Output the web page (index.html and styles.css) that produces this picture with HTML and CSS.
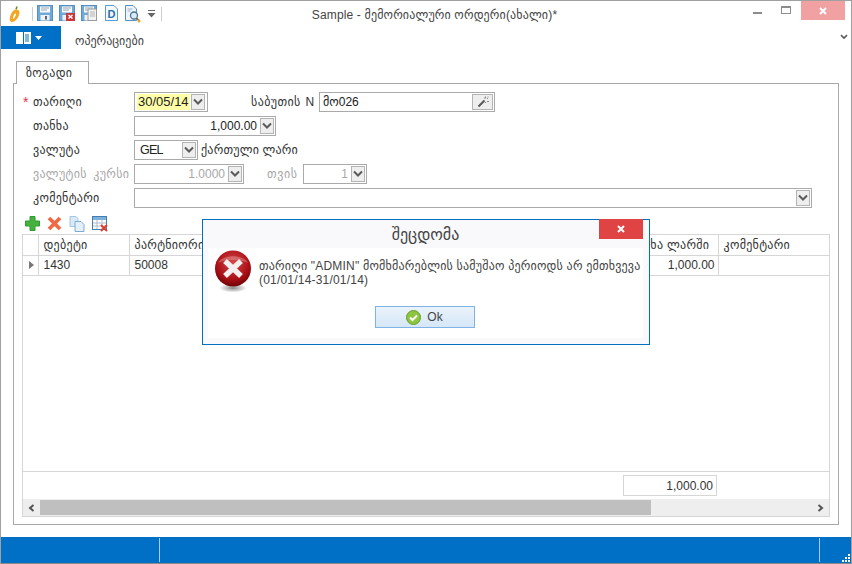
FILE: index.html
```html
<!DOCTYPE html>
<html>
<head>
    <meta charset="utf-8">
    <title>Sample</title>
    <link rel="stylesheet" href="styles.css">
</head>
<body>
    <svg class="defs" width="0" height="0">
        <symbol id="arrow-down" viewBox="0 0 10 8">
            <path d="M1 1.500 L5 5.500 L9 1.500" fill="none" stroke="#5a5a5a" stroke-width="2"/>
        </symbol>
        <symbol id="floppy" viewBox="0 0 16 16">
            <rect x="0.500" y="0.500" width="15" height="15" fill="#6fa9d8" stroke="#5a8fbd"/>
            <rect x="3" y="1.500" width="10" height="6" fill="#f7fafc"/>
            <path d="M4 3h8M4 5h6" stroke="#9aa8b5"/>
            <rect x="3.500" y="10" width="9" height="5.500" fill="#eef2f6"/>
            <rect x="8" y="11" width="2" height="3.500" fill="#55697a"/>
        </symbol>
    </svg>

    <div class="window">
        <div class="titlebar">
            <svg class="logo" width="14" height="18" viewBox="0 0 14 18">
                <path d="M8 3.500 L9 0.500" stroke="#5d8f2a" stroke-width="1.500"/>
                <path d="M5 5 C8 2.500 12 3.500 11.500 7 C11 10.500 8 16 4 16 C1 16 1.500 12 2.500 9.500 C3 8 4 6 5 5 Z M6.500 8 C5.500 9.500 4.500 12 5 13 C6 13 7.500 10.500 8 8.500 C8.200 7.500 7.200 7 6.500 8 Z" fill="#f5a623" fill-rule="evenodd"/>
            </svg>
            <span class="sep sep-first"></span>
            <svg class="qa" width="16" height="16"><use href="#floppy"/></svg>
            <svg class="qa" width="16" height="16" viewBox="0 0 16 16">
                <use href="#floppy" width="16" height="16"/>
                <rect x="7" y="8" width="9" height="8" fill="#c8383a"/>
                <path d="M9.500 10l4 3.500M13.500 10l-4 3.500" stroke="#fff" stroke-width="1.400"/>
            </svg>
            <svg class="qa" width="16" height="16" viewBox="0 0 16 16">
                <use href="#floppy" width="16" height="16"/>
                <path d="M7 4h8.500v11.500H7z" fill="#f2f2f2" stroke="#9a9a9a"/>
                <path d="M9 7h5M9 9h5M9 11h5" stroke="#b5b5b5"/>
            </svg>
            <svg class="qa" width="16" height="16" viewBox="0 0 16 16">
                <path d="M2.500 0.500H11L14.500 4V15.500H2.500Z" fill="#f4f9fd" stroke="#5b9bd0"/>
                <text class="doc-letter" x="4.500" y="13">D</text>
            </svg>
            <svg class="qa" width="16" height="18" viewBox="0 0 16 18">
                <path d="M0.500 0.500H8L11.500 4V15.500H0.500Z" fill="#eef4fa" stroke="#5b8fbd"/>
                <path d="M2.500 4h5M2.500 6h3" stroke="#9fb6ca"/>
                <circle cx="9" cy="10.500" r="3.500" fill="#d8ecf7" stroke="#4a7396" stroke-width="1.300"/>
                <path d="M11.500 13l2.500 2.500" stroke="#7a6a40" stroke-width="1.500"/>
                <circle cx="14" cy="16" r="1.500" fill="#f0a030"/>
            </svg>
            <svg class="qa-more" width="9" height="8" viewBox="0 0 9 8">
                <path d="M1 0.500h7" stroke="#666"/>
                <path d="M0.500 3h8L4.500 7.500Z" fill="#666"/>
            </svg>
            <span class="sep"></span>
            <div class="title">Sample - მემორიალური ორდერი(ახალი)*</div>
            <svg class="win-min" width="9" height="2"><rect width="9" height="2" fill="#8c8c8c"/></svg>
            <svg class="win-max" width="10" height="8" viewBox="0 0 10 8">
                <rect x="0.500" y="0.500" width="9" height="7" fill="none" stroke="#8c8c8c"/>
                <rect x="0" y="0" width="10" height="2" fill="#8c8c8c"/>
            </svg>
            <div class="win-close">
                <svg width="8" height="8" viewBox="0 0 8 8"><path d="M1 1l6 6M7 1l-6 6" stroke="#fff" stroke-width="2"/></svg>
            </div>
        </div>

        <div class="menubar">
            <div class="app-button">
                <svg width="15" height="12" viewBox="0 0 15 12">
                    <rect x="0.500" y="0.500" width="14" height="11" fill="#fff" stroke="#fff"/>
                    <path d="M7.500 0v12" stroke="#0070c6"/>
                    <path d="M9 3h4M9 5h4M9 7h4M9 9h4" stroke="#0070c6"/>
                </svg>
                <svg width="7" height="4" viewBox="0 0 7 4"><path d="M0 0h7L3.500 4Z" fill="#fff"/></svg>
            </div>
            <div class="menu-item">ოპერაციები</div>
            <svg class="collapse" width="8" height="6"><use href="#arrow-down"/></svg>
        </div>

        <div class="tabs">
            <div class="tab">ზოგადი</div>
        </div>

        <div class="panel">
            <div class="form">
                <div class="row">
                    <label class="lbl"><span class="req">*</span>თარიღი</label>
                    <div class="box w-date">
                        <span class="val val-hl">30/05/14</span>
                        <span class="drop"><svg width="10" height="8"><use href="#arrow-down"/></svg></span>
                    </div>
                    <label class="lbl-doc">საბუთის N</label>
                    <div class="box w-doc">
                        <span class="val val-left">მო026</span>
                        <span class="drop drop-wand">
                            <svg width="12" height="12" viewBox="0 0 12 12">
                                <path d="M1.500 10.500L7.500 4.500" stroke="#555" stroke-width="2"/>
                                <path d="M8.500 0.500v2M10.500 2v1M7 2h1M10 5.500h2M8.500 6v1M11 0.500v1" stroke="#888"/>
                            </svg>
                        </span>
                    </div>
                </div>
                <div class="row">
                    <label class="lbl">თანხა</label>
                    <div class="box w-amount">
                        <span class="val val-right">1,000.00</span>
                        <span class="drop"><svg width="10" height="8"><use href="#arrow-down"/></svg></span>
                    </div>
                </div>
                <div class="row">
                    <label class="lbl">ვალუტა</label>
                    <div class="box w-cur">
                        <span class="val val-cur">GEL</span>
                        <span class="drop"><svg width="10" height="8"><use href="#arrow-down"/></svg></span>
                    </div>
                    <span class="cur-name">ქართული ლარი</span>
                </div>
                <div class="row">
                    <label class="lbl is-disabled">ვალუტის კურსი</label>
                    <div class="box w-rate is-disabled">
                        <span class="val val-right">1.0000</span>
                        <span class="drop"><svg width="10" height="8"><use href="#arrow-down"/></svg></span>
                    </div>
                    <label class="lbl-for is-disabled">თვის</label>
                    <div class="box w-for is-disabled">
                        <span class="val val-right">1</span>
                        <span class="drop"><svg width="10" height="8"><use href="#arrow-down"/></svg></span>
                    </div>
                </div>
                <div class="row">
                    <label class="lbl">კომენტარი</label>
                    <div class="box w-comment">
                        <span class="val"></span>
                        <span class="drop"><svg width="10" height="8"><use href="#arrow-down"/></svg></span>
                    </div>
                </div>
            </div>

            <div class="grid-tools">
                <svg width="15" height="15" viewBox="0 0 15 15">
                    <path d="M5 0.500h5v4.500h4.500v5H10v4.500H5V10H0.500V5H5Z" fill="#45b23f" stroke="#2f9a2d"/>
                </svg>
                <svg width="15" height="15" viewBox="0 0 15 15">
                    <path d="M2 2l11 11M13 2L2 13" stroke="#ef6a45" stroke-width="3.800"/>
                </svg>
                <svg width="16" height="16" viewBox="0 0 16 16">
                    <path d="M1 0.500h6l2 2v8H1Z" fill="#d8e9f7" stroke="#a3c6e2"/>
                    <path d="M6 5.500h6l3 3v7H6Z" fill="#e3f0fa" stroke="#7fabd0"/>
                </svg>
                <svg width="17" height="16" viewBox="0 0 17 16">
                    <rect x="0.500" y="0.500" width="14" height="13" fill="#fff" stroke="#3d7fb5"/>
                    <rect x="1" y="1" width="13" height="3" fill="#7fb0d8"/>
                    <path d="M1 7h13M1 10h13M5 4v9M10 4v9" stroke="#b0bcc8"/>
                    <path d="M9 9l6 6M15 9l-6 6" stroke="#e03a2a" stroke-width="1.800"/>
                </svg>
            </div>

            <div class="grid">
                <table class="grid-table">
                    <colgroup>
                        <col class="c-mark">
                        <col class="c-debit">
                        <col class="c-partner">
                        <col class="c-amount">
                        <col>
                    </colgroup>
                    <tr class="head">
                        <th></th>
                        <th>დებეტი</th>
                        <th>პარტნიორი</th>
                        <th>თანხა ლარში</th>
                        <th>კომენტარი</th>
                    </tr>
                    <tr>
                        <td class="mark"><svg width="5" height="8"><path d="M0 0l5 4-5 4Z" fill="#777"/></svg></td>
                        <td>1430</td>
                        <td>50008</td>
                        <td class="num">1,000.00</td>
                        <td></td>
                    </tr>
                </table>
                <div class="grid-space"></div>
                <div class="grid-total">
                    <div class="total-box">1,000.00</div>
                </div>
                <div class="scrollbar">
                    <span class="sb-btn"><svg width="7" height="8" viewBox="0 0 7 8"><path d="M5.500 1L2 4l3.500 3" fill="none" stroke="#555" stroke-width="2"/></svg></span>
                    <span class="sb-thumb"></span>
                    <span class="sb-rest"></span>
                    <span class="sb-btn"><svg width="7" height="8" viewBox="0 0 7 8"><path d="M1.500 1L5 4 1.500 7" fill="none" stroke="#555" stroke-width="2"/></svg></span>
                </div>
            </div>
        </div>

        <div class="statusbar">
            <span class="st-cell st-a"></span>
            <span class="st-cell st-b"></span>
            <svg class="grip" width="9" height="9" viewBox="0 0 9 9">
                <path d="M7 1h2v2H7zM4 4h2v2H4zM7 4h2v2H7zM1 7h2v2H1zM4 7h2v2H4zM7 7h2v2H7z" fill="#fff"/>
            </svg>
        </div>
    </div>

    <!-- error message over the form -->
    <div class="dialog">
        <div class="dialog-title">შეცდომა</div>
        <div class="dialog-close">
            <svg width="8" height="8" viewBox="0 0 8 8"><path d="M1 1l6 6M7 1l-6 6" stroke="#fff" stroke-width="2"/></svg>
        </div>
        <div class="dialog-body">
            <div class="dialog-msg">
                <svg class="err-icon" width="38" height="44" viewBox="0 0 38 44">
                    <defs>
                        <radialGradient id="ball" cx="50%" cy="35%" r="65%">
                            <stop offset="0" stop-color="#d9474a"/>
                            <stop offset="0.700" stop-color="#a80f14"/>
                            <stop offset="1" stop-color="#6e0508"/>
                        </radialGradient>
                        <radialGradient id="shade" cx="50%" cy="50%" r="50%">
                            <stop offset="0" stop-color="#888"/>
                            <stop offset="1" stop-color="#fff"/>
                        </radialGradient>
                    </defs>
                    <ellipse cx="19" cy="38" rx="14" ry="4.500" fill="url(#shade)"/>
                    <circle cx="19" cy="18.500" r="18" fill="url(#ball)"/>
                    <path d="M4 13 C8 4 30 4 34 13 C27 9 11 9 4 13 Z" fill="#fff" opacity="0.250"/>
                    <path d="M11 11l16 15M27 11L11 26" stroke="#f4eeee" stroke-width="5.500"/>
                </svg>
                <p class="msg-text">თარიღი "ADMIN" მომხმარებლის სამუშაო პერიოდს არ ემთხვევა (01/01/14-31/01/14)</p>
            </div>
            <div class="dialog-actions">
                <div class="ok-btn">
                    <svg width="15" height="15" viewBox="0 0 15 15">
                        <circle cx="7.500" cy="7.500" r="7" fill="#8cc63f" stroke="#6a9a2a"/>
                        <path d="M4 7.500l2.500 2.500L11 5.500" fill="none" stroke="#fff" stroke-width="2"/>
                    </svg>
                    <span>Ok</span>
                </div>
            </div>
        </div>
    </div>
</body>
</html>
```

FILE: styles.css
```css
* {
    box-sizing: border-box;
}
html, body {
    margin: 0;
    padding: 0;
    height: 564px;
    overflow: hidden;
}
body {
    background-color: #fff;
    color: #333;
    font-family: "Liberation Sans", "DejaVu Sans", sans-serif;
    font-size: 12px;
    position: relative;
}
.defs {
    position: absolute;
}

.window {
    height: 564px;
    display: flex;
    flex-direction: column;
    border: 1px solid #a0a0a0;
    border-bottom-color: #8c8c8c;
    background-color: #fff;
}

/* title bar */
.titlebar {
    height: 25px;
    flex: none;
    display: flex;
    align-items: flex-start;
    padding-left: 7px;
}
.logo {
    margin-top: 5px;
}
.sep {
    width: 1px;
    height: 14px;
    margin-top: 6px;
    background-color: #ccc;
}
.sep-first {
    margin: 6px 4px 0 10px;
}
.qa {
    margin: 4px 6px 0 0;
    flex: none;
}
.doc-letter {
    font-family: "Liberation Sans", sans-serif;
    font-size: 11px;
    font-weight: bold;
    fill: #2a6fb0;
}
.qa-more {
    margin: 9px 5px 0 0;
}
.title {
    flex: 1;
    text-align: center;
    line-height: 28px;
    padding-right: 46px;
    letter-spacing: 0.15px;
    color: #444;
}
.win-min {
    margin: 11px 19px 0 0;
}
.win-max {
    margin: 5px 10px 0 0;
}
.win-close {
    width: 44px;
    height: 19px;
    margin-right: 6px;
    background-color: #f1a1a1;
    display: flex;
    align-items: center;
    justify-content: center;
}

/* menu row */
.menubar {
    height: 23px;
    flex: none;
    display: flex;
    align-items: center;
}
.app-button {
    width: 60px;
    height: 23px;
    background-color: #0070c6;
    display: flex;
    align-items: center;
    justify-content: center;
    gap: 4px;
    padding-right: 4px;
}
.menu-item {
    margin-left: 14px;
    padding-top: 6px;
    color: #444;
}
.collapse {
    margin: -2px 3px 0 auto;
}

/* tab */
.tabs {
    height: 34px;
    flex: none;
    display: flex;
    align-items: flex-end;
    padding-left: 15px;
}
.tab {
    width: 73px;
    height: 23px;
    border: 1px solid #a8a8a8;
    border-bottom: 0;
    line-height: 23px;
    padding-left: 9px;
    margin-bottom: -1px;
    position: relative;
    background-color: #fff;
    letter-spacing: 0.3px;
}

/* main panel */
.panel {
    width: 826px;
    height: 442px;
    margin-left: 12px;
    flex: none;
    border: 1px solid #a8a8a8;
    display: flex;
    flex-direction: column;
    padding: 8px 8px 7px 8px;
}
.form {
    display: flex;
    flex-direction: column;
    gap: 4px;
    margin-bottom: 5px;
}
.row {
    height: 20px;
    display: flex;
    align-items: center;
}
.lbl {
    width: 112px;
    flex: none;
    padding-left: 11px;
    position: relative;
    letter-spacing: 0.3px;
    word-spacing: 3px;
    white-space: nowrap;
}
.req {
    position: absolute;
    left: 1px;
    top: -1px;
    color: #e8304a;
    font-size: 14px;
}
.lbl-doc {
    margin-left: 43px;
    width: 68px;
    flex: none;
    letter-spacing: 0.4px;
    word-spacing: 1px;
}
.lbl-for {
    margin-left: 23px;
    width: 36px;
    flex: none;
    letter-spacing: 0.6px;
}
.box {
    height: 20px;
    border: 1px solid #aaa;
    display: flex;
    align-items: center;
    padding: 1px;
    flex: none;
    background-color: #fff;
}
.w-date { width: 74px; }
.w-doc { width: 176px; }
.w-amount { width: 142px; }
.w-cur { width: 64px; }
.w-rate { width: 110px; }
.w-for { width: 64px; }
.w-comment { width: 678px; }
.val {
    flex: 1;
    min-width: 0;
    height: 16px;
    line-height: 16px;
    white-space: nowrap;
    color: #222;
}
.val-hl {
    flex: none;
    width: 53px;
    margin: 0 1px;
    padding-left: 1px;
    background-color: #ffffa8;
    font-size: 13px;
}
.val-left {
    padding-left: 2px;
}
.val-cur {
    padding-left: 4px;
    letter-spacing: -0.8px;
    font-size: 12.500px;
}
.val-right {
    text-align: right;
    padding-right: 3px;
}
.drop {
    width: 14px;
    height: 16px;
    flex: none;
    border: 1px solid #b4b4b4;
    background-color: #eee;
    display: flex;
    align-items: center;
    justify-content: center;
}
.drop-wand {
    width: 21px;
}
.cur-name {
    margin-left: 3px;
    letter-spacing: 0.2px;
}
.is-disabled {
    color: #a8a8a8;
}
.is-disabled .val {
    color: #a8a8a8;
}

/* grid */
.grid-tools {
    height: 21px;
    flex: none;
    display: flex;
    align-items: center;
    gap: 7px;
    padding-left: 3px;
}
.grid {
    flex: 1;
    display: flex;
    flex-direction: column;
    border: 1px solid #d6d6d6;
    min-height: 0;
}
.grid-table {
    width: 100%;
    table-layout: fixed;
    border-collapse: collapse;
    flex: none;
}
.c-mark { width: 15px; }
.c-debit { width: 91px; }
.c-partner { width: 493px; }
.c-amount { width: 96px; }
.grid-table th,
.grid-table td {
    height: 20px;
    padding: 0 3px 0 5px;
    border: 1px solid #d6d6d6;
    border-top: 0;
    text-align: left;
    font-weight: normal;
    overflow: hidden;
    white-space: nowrap;
}
.grid-table th {
    letter-spacing: 0.3px;
}
.grid-table th:first-child,
.grid-table td:first-child {
    border-left: 0;
}
.grid-table th:last-child,
.grid-table td:last-child {
    border-right: 0;
}
.grid-table td.num {
    text-align: right;
}
.grid-table td.mark {
    padding: 0 0 0 6px;
}
.grid-space {
    flex: 1;
    border-bottom: 1px solid #d6d6d6;
}
.grid-total {
    height: 27px;
    flex: none;
    padding: 3px 0 0 600px;
}
.total-box {
    width: 94px;
    height: 21px;
    border: 1px solid #d6d6d6;
    text-align: right;
    line-height: 20px;
    padding-right: 3px;
}
.scrollbar {
    height: 17px;
    flex: none;
    display: flex;
    background-color: #eee;
}
.sb-btn {
    width: 17px;
    flex: none;
    display: flex;
    align-items: center;
    justify-content: center;
}
.sb-thumb {
    width: 611px;
    margin: 1px 0;
    background-color: #bfbfbf;
}
.sb-rest {
    flex: 1;
}

/* status bar */
.statusbar {
    margin-top: auto;
    height: 26px;
    flex: none;
    background-color: #0070c6;
    display: flex;
    align-items: center;
    position: relative;
}
.st-cell {
    height: 24px;
    border-right: 1px solid #a8cfec;
    flex: none;
}
.st-a { width: 159px; }
.st-b { width: 660px; }
.grip {
    position: absolute;
    right: 1px;
    bottom: 1px;
}

/* error dialog */
.dialog {
    position: absolute;
    left: 202px;
    top: 219px;
    width: 448px;
    height: 126px;
    border: 1px solid #0070c0;
    background-color: #f9f9fb;
    padding: 0 6px 6px 5px;
    display: flex;
    flex-direction: column;
}
.dialog-title {
    height: 28px;
    flex: none;
    text-align: center;
    font-size: 16px;
    line-height: 29px;
    color: #444;
}
.dialog-close {
    position: absolute;
    right: 6px;
    top: -1px;
    width: 44px;
    height: 20px;
    background-color: #e04343;
    display: flex;
    align-items: center;
    justify-content: center;
}
.dialog-body {
    flex: 1;
    background-color: #fff;
    display: flex;
    flex-direction: column;
    padding: 2px 0 0 6px;
}
.dialog-msg {
    display: flex;
    gap: 7px;
}
.err-icon {
    flex: none;
}
.msg-text {
    margin: 9px 0 0;
    line-height: 14px;
    letter-spacing: 0.2px;
    color: #444;
}
.dialog-actions {
    display: flex;
    justify-content: center;
    margin-top: 12px;
    padding-right: 8px;
}
.ok-btn {
    width: 100px;
    height: 22px;
    border: 1px solid #7fb2e5;
    background: linear-gradient(#eaf3fb, #d5e7f8);
    display: flex;
    align-items: center;
    justify-content: center;
    gap: 6px;
    color: #444;
}
```
